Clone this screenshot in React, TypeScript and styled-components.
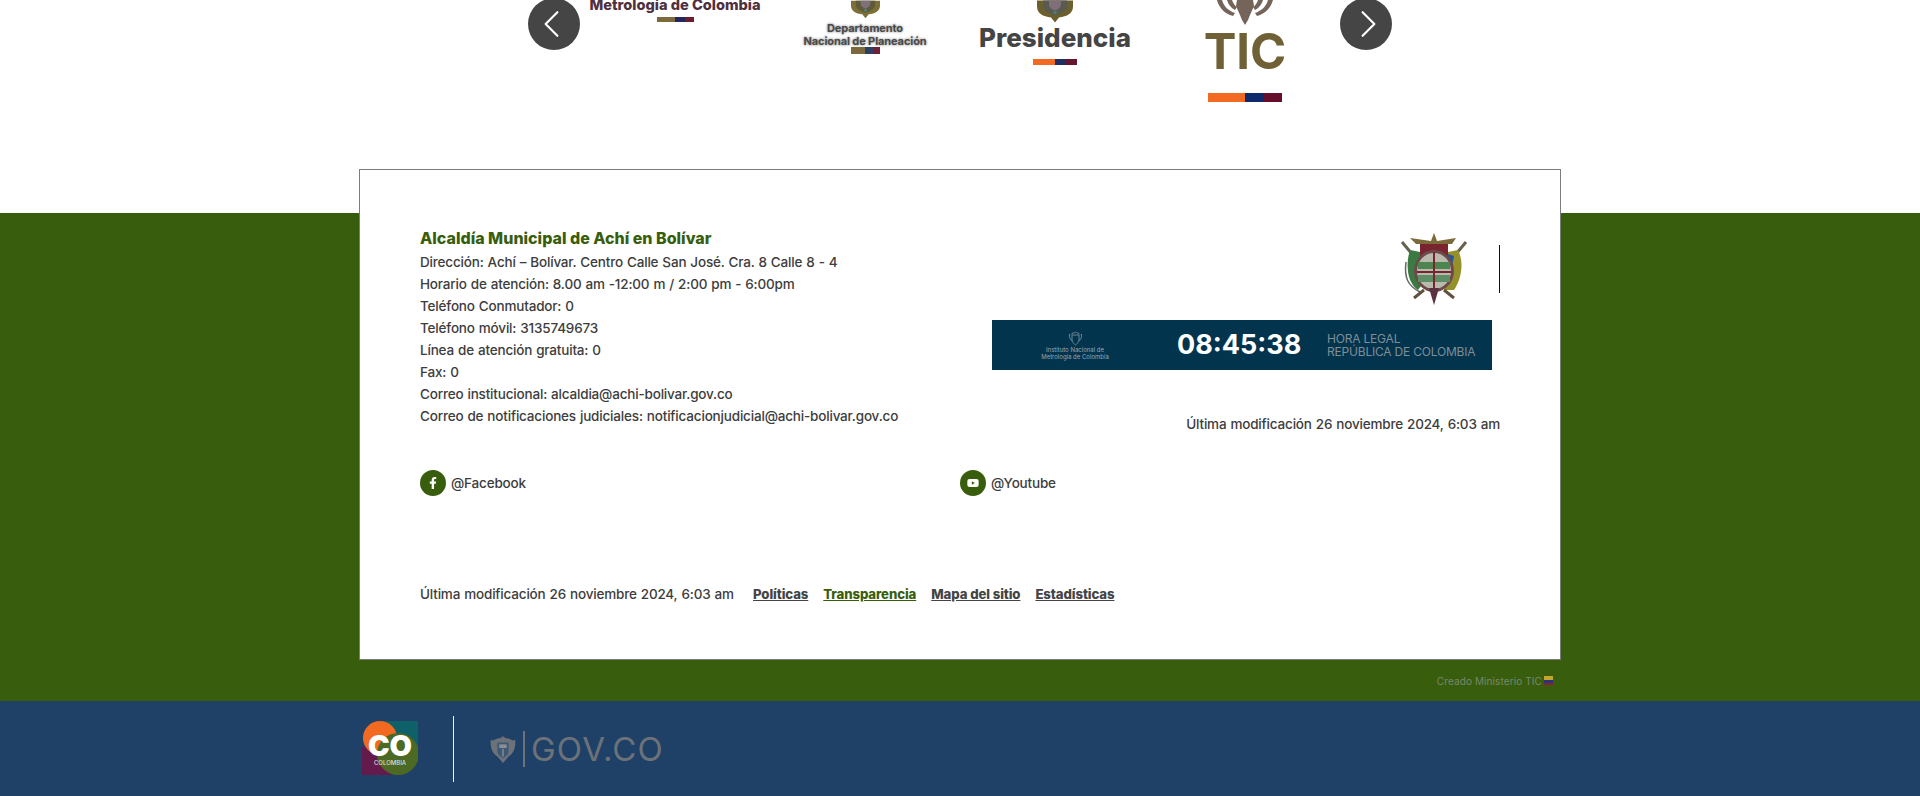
import { createGlobalStyle, styled } from "styled-components"
import { ChevronLeft, ChevronRight } from "lucide-react"
import { FaFacebookF, FaYoutube } from "react-icons/fa"

const GlobalStyle = createGlobalStyle`
  html, body {
    margin: 0;
    padding: 0;
    height: 100%;
    overflow: hidden;
    background: #fff;
  }
  body {
    font-family: Inter, "Liberation Sans", sans-serif;
    color: #3d3d3d;
  }
`

const Top = styled.section`
  height: 215px;
  margin-top: -2px;
  display: flex;
  justify-content: center;
  align-items: flex-start;
`
const Arrow = styled.button<{ $side: "left" | "right" }>`
  width: 52px;
  height: 52px;
  flex: none;
  border: 0;
  border-radius: 50%;
  background: #454545;
  color: #fff;
  display: flex;
  align-items: center;
  justify-content: center;
  padding: ${(p) => (p.$side === "left" ? "0 5px 0 0" : "0 0 0 5px")};
`
const Slide = styled.div<{ $top: number }>`
  width: 190px;
  height: 130px;
  padding-top: ${(p) => p.$top}px;
  box-sizing: border-box;
  display: flex;
  flex-direction: column;
  align-items: center;
  white-space: nowrap;
`
const LogoName = styled.div<{ $size: number; $color: string; $h: number; $weight?: number }>`
  font-size: ${(p) => p.$size}px;
  line-height: ${(p) => p.$h}px;
  font-weight: ${(p) => p.$weight ?? 800};
  color: ${(p) => p.$color};
  text-align: center;
`
const SmallName = styled.div`
  font-size: 11px;
  line-height: 12.5px;
  font-weight: 700;
  color: #4a4a4a;
  text-align: center;
  letter-spacing: -0.1px;
  text-shadow: 0 0 3px #9a9a9a, 0 0 2px #b0b0b0;
`
const TricolorBar = styled.div<{ $w: number; $h: number; $mt: number; $a: string; $b: string; $c: string }>`
  width: ${(p) => p.$w}px;
  height: ${(p) => p.$h}px;
  margin-top: ${(p) => p.$mt}px;
  background: linear-gradient(
    90deg,
    ${(p) => p.$a} 0 50%,
    ${(p) => p.$b} 50% 75%,
    ${(p) => p.$c} 75% 100%
  );
`
const CrestHolder = styled.div<{ $mt?: number }>`
  display: flex;
  margin-top: ${(p) => p.$mt ?? 0}px;
`

const Green = styled.section`
  display: flow-root;
  height: 488px;
  background: #385e0d;
`
const Card = styled.div`
  width: 1202px;
  height: 491px;
  box-sizing: border-box;
  margin: -44px auto 0;
  padding: 57px 60px 0;
  background: #fff;
  border: 1px solid #7c7c7c;
  font-size: 13.5px;
  line-height: 22px;
  letter-spacing: -0.18px;
  word-spacing: 0.6px;
`
const Columns = styled.div`
  display: grid;
  grid-template-columns: 540px 540px;
`
const Title = styled.h2`
  margin: 0 0 2px;
  font-size: 16px;
  line-height: 22px;
  font-weight: 800;
  color: #385e0d;
  letter-spacing: 0;
  word-spacing: 0;
`
const Line = styled.p`
  margin: 0;
  font-weight: 500;
`
const RightCol = styled.div`
  display: flex;
  flex-direction: column;
  align-items: flex-end;
`
const ShieldRow = styled.div`
  display: flex;
  align-items: center;
  height: 74px;
  margin-top: 5px;
`
const Cursor = styled.div`
  width: 1px;
  height: 48px;
  background: #111;
  margin-left: 29px;
`
const Clock = styled.div`
  width: 500px;
  height: 50px;
  margin: 14px 8px 0 0;
  background: #03344e;
  display: flex;
  align-items: center;
  letter-spacing: 0;
  word-spacing: 0;
`
const ClockOrg = styled.div`
  width: 166px;
  margin-right: 19px;
  display: flex;
  flex-direction: column;
  align-items: center;
  color: #9aa7ae;
  font-size: 6px;
  line-height: 7px;
  text-align: center;
`
const ClockTime = styled.div`
  color: #fff;
  font-size: 27px;
  line-height: 32px;
  font-weight: 700;
  width: 150px;
`
const ClockLabel = styled.div`
  color: #7f8d96;
  font-size: 12px;
  line-height: 13px;
  letter-spacing: -0.2px;
`
const RightMod = styled.p`
  margin: 43px 0 0;
  font-weight: 500;
`
const Socials = styled.div`
  display: grid;
  grid-template-columns: 540px 540px;
  margin-top: 35px;
`
const Social = styled.a`
  display: flex;
  align-items: center;
  gap: 5px;
  color: #3d3d3d;
  font-weight: 500;
`
const SocialIcon = styled.span`
  width: 26px;
  height: 26px;
  border-radius: 50%;
  background: #385e0d;
  color: #fff;
  display: flex;
  align-items: center;
  justify-content: center;
  font-size: 12px;
`
const BottomRow = styled.div`
  display: flex;
  margin-top: 87px;
`
const Mod = styled.span`
  font-weight: 500;
  width: 333px;
`
const FootLinks = styled.nav`
  display: flex;
  gap: 15px;
`
const FootLink = styled.a<{ $green?: boolean }>`
  font-weight: 800;
  font-size: 13.2px;
  letter-spacing: -0.1px;
  word-spacing: 0;
  text-decoration: underline;
  color: ${(p) => (p.$green ? "#385e0d" : "#444")};
`
const Credit = styled.div`
  width: 1202px;
  height: 41px;
  margin: 0 auto;
  box-sizing: border-box;
  padding-right: 8px;
  display: flex;
  align-items: center;
  justify-content: flex-end;
  gap: 2px;
  font-size: 10px;
  letter-spacing: 0.1px;
  color: #79876b;
`
const Flag = styled.span`
  width: 9px;
  height: 9px;
  background: linear-gradient(#c4a72a 0 50%, #26357a 50% 75%, #8c1f33 75% 100%);
`

const Blue = styled.footer`
  height: 95px;
  background: #1f4168;
`
const BlueInner = styled.div`
  width: 1202px;
  height: 100%;
  margin: 0 auto;
  box-sizing: border-box;
  padding-left: 3px;
  display: flex;
  align-items: center;
`
const Divider = styled.div`
  width: 1px;
  height: 66px;
  background: #f0f0f0;
  margin: 0 35px;
`
const GovMark = styled.div`
  display: flex;
  align-items: center;
  color: #6d7278;
`
const GovBar = styled.div`
  width: 2px;
  height: 36px;
  background: #6d7278;
  margin: 0 6px;
`
const GovText = styled.span`
  font-size: 33px;
  line-height: 36px;
  font-weight: 400;
  letter-spacing: 1.2px;
`

function CrestBottom({ w, h, outer, inner }: { w: number; h: number; outer: string; inner: string }) {
  return (
    <svg width={w} height={h} viewBox="0 0 36 22">
      <path d="M0 0H36V6C36 13 30 16 22 17L18 22L14 17C6 16 0 13 0 6Z" fill={outer} />
      <path d="M6 0H30V5C30 10 24 13 18 15C12 13 6 10 6 5Z" fill={inner} />
      <path d="M12 0H24V4C24 7 21 9 18 10C15 9 12 7 12 4Z" fill="#7f6f78" />
      <circle cx="18" cy="12" r="1.8" fill="#4f7f72" />
    </svg>
  )
}

function GovCrest({ size }: { size: number }) {
  return (
    <svg width={size} height={size} viewBox="0 0 28 30">
      <path d="M4 6C8 2 11 5 14 1C17 5 20 2 24 6L27 5C28 14 25 20 20 23L14 30L8 23C3 20 0 14 1 5Z" fill="#6d7278" />
      <path d="M8 8H20V17C20 21 17 23 14 25C11 23 8 21 8 17Z" fill="#3d5875" />
      <path d="M10 10H18V14H10Z" fill="#8a8f94" />
      <path d="M14 15V23" stroke="#8a8f94" strokeWidth="1.5" />
    </svg>
  )
}

function MetroCrest({ size, color }: { size: number; color: string }) {
  return (
    <svg width={size} height={size} viewBox="0 0 28 30" fill="none" stroke={color}>
      <path d="M5 7C7 3 11 5 14 2C17 5 21 3 23 7" strokeWidth="2" />
      <path d="M2 6C1 14 4 18 8 20M26 6C27 14 24 18 20 20" strokeWidth="2" />
      <path d="M7 8H21V17C21 23 17 25 14 28C11 25 7 23 7 17Z" strokeWidth="2" />
    </svg>
  )
}

function MunicipalShield() {
  return (
    <svg width="72" height="74" viewBox="0 0 72 74">
      <path d="M36 1L39 9L58 6L54 12H18L12 6L33 9Z" fill="#7b6a3a" />
      <path d="M4 10L14 22M68 10L58 22" stroke="#66624e" strokeWidth="3" />
      <path d="M12 18C8 30 8 50 20 58L26 50L22 20Z" fill="#3c7a44" />
      <path d="M60 18L50 20L46 58H56C64 46 66 30 60 18Z" fill="#95902a" />
      <path d="M50 22L56 24L52 44L48 40Z" fill="#27539a" />
      <path d="M8 30C6 46 10 54 22 60" stroke="#666" strokeWidth="1.5" fill="none" />
      <rect x="22" y="12" width="28" height="16" fill="#7a2430" />
      <ellipse cx="36" cy="39" rx="20" ry="21" fill="#6d4a4a" />
      <ellipse cx="36" cy="39" rx="17" ry="18" fill="#b9b9ad" />
      <path d="M20 30H52V37H20Z" fill="#4c8550" />
      <path d="M20 43H52V50H20Z" fill="#5f8d65" />
      <path d="M19 40H53M36 20V66" stroke="#7a2430" strokeWidth="2" />
      <path d="M31 56L36 73L41 56Z" fill="#5a3140" />
      <path d="M16 66L26 58M56 66L46 58" stroke="#5f5140" strokeWidth="3" />
    </svg>
  )
}

function Eagle() {
  return (
    <svg width="56" height="25" viewBox="0 0 56 25" fill="#75645a">
      <path d="M0 0H5C7 7 12 11 18 13L16 16C8 14 2 8 0 0Z" />
      <path d="M56 0H51C49 7 44 11 38 13L40 16C48 14 54 8 56 0Z" />
      <path d="M10 0H15C16 3 18 6 20 7L18 10C14 8 11 4 10 0Z" />
      <path d="M46 0H41C40 3 38 6 36 7L38 10C42 8 45 4 46 0Z" />
      <path d="M20 0H36L37 6L33 15L31 20L28 25L25 20L23 15L19 6Z" />
    </svg>
  )
}

function CoLogo() {
  return (
    <svg width="56" height="56" viewBox="0 0 56 56">
      <rect x="20" y="0" width="36" height="30" fill="#0e6169" />
      <rect x="0" y="26" width="30" height="28" fill="#651a4c" />
      <circle cx="18" cy="17" r="17" fill="#f26a21" />
      <circle cx="36" cy="33" r="21" fill="#4c6a24" />
      <text x="28" y="35" textAnchor="middle" fontFamily="Inter, sans-serif" fontSize="29" fontWeight="900" fill="#fff">CO</text>
      <text x="28" y="44" textAnchor="middle" fontFamily="Inter, sans-serif" fontSize="6" fontWeight="500" fill="#ddd">COLOMBIA</text>
    </svg>
  )
}

export default function App() {
  return (
    <>
      <GlobalStyle />
      <Top>
        <Arrow $side="left" aria-label="Anterior">
          <ChevronLeft size={54} strokeWidth={1.1} />
        </Arrow>
        <Slide $top={0}>
          <LogoName $size={14.6} $color="#4f3040" $h={14}>Metrología de Colombia</LogoName>
          <TricolorBar $w={37} $h={5} $mt={5} $a="#7b6a3c" $b="#26265f" $c="#6b1e30" />
        </Slide>
        <Slide $top={2}>
          <CrestHolder>
            <CrestBottom w={29} h={19} outer="#7c7038" inner="#5f5a3a" />
          </CrestHolder>
          <CrestHolder $mt={3}>
            <SmallName>
              Departamento
              <br />
              Nacional de Planeación
            </SmallName>
          </CrestHolder>
          <TricolorBar $w={29} $h={7} $mt={0} $a="#7c6a3f" $b="#2e3f63" $c="#6f2038" />
        </Slide>
        <Slide $top={2}>
          <CrestHolder>
            <CrestBottom w={36} h={23} outer="#6b5f2e" inner="#5a5a50" />
          </CrestHolder>
          <LogoName $size={26} $color="#444" $h={30}>Presidencia</LogoName>
          <TricolorBar $w={44} $h={6} $mt={6} $a="#f26a21" $b="#1f2f66" $c="#63162e" />
        </Slide>
        <Slide $top={2}>
          <Eagle />
          <LogoName $size={49} $color="#6f6036" $h={54} $weight={700}>TIC</LogoName>
          <TricolorBar $w={74} $h={9} $mt={14} $a="#f26a21" $b="#10296b" $c="#650f2c" />
        </Slide>
        <Arrow $side="right" aria-label="Siguiente">
          <ChevronRight size={54} strokeWidth={1.1} />
        </Arrow>
      </Top>
      <Green>
        <Card>
          <Columns>
            <div>
              <Title>Alcaldía Municipal de Achí en Bolívar</Title>
              <Line>Dirección: Achí – Bolívar. Centro Calle San José. Cra. 8 Calle 8 - 4</Line>
              <Line>Horario de atención: 8.00 am -12:00 m / 2:00 pm - 6:00pm</Line>
              <Line>Teléfono Conmutador: 0</Line>
              <Line>Teléfono móvil: 3135749673</Line>
              <Line>Línea de atención gratuita: 0</Line>
              <Line>Fax: 0</Line>
              <Line>Correo institucional: alcaldia@achi-bolivar.gov.co</Line>
              <Line>Correo de notificaciones judiciales: notificacionjudicial@achi-bolivar.gov.co</Line>
            </div>
            <RightCol>
              <ShieldRow>
                <MunicipalShield />
                <Cursor />
              </ShieldRow>
              <Clock>
                <ClockOrg>
                  <MetroCrest size={15} color="#6f8796" />
                  Instituto Nacional de
                  <br />
                  Metrología de Colombia
                </ClockOrg>
                <ClockTime>08:45:38</ClockTime>
                <ClockLabel>
                  HORA LEGAL
                  <br />
                  REPÚBLICA DE COLOMBIA
                </ClockLabel>
              </Clock>
              <RightMod>Última modificación 26 noviembre 2024, 6:03 am</RightMod>
            </RightCol>
          </Columns>
          <Socials>
            <Social>
              <SocialIcon><FaFacebookF /></SocialIcon>
              @Facebook
            </Social>
            <Social>
              <SocialIcon><FaYoutube /></SocialIcon>
              @Youtube
            </Social>
          </Socials>
          <BottomRow>
            <Mod>Última modificación 26 noviembre 2024, 6:03 am</Mod>
            <FootLinks>
              <FootLink>Políticas</FootLink>
              <FootLink $green>Transparencia</FootLink>
              <FootLink>Mapa del sitio</FootLink>
              <FootLink>Estadísticas</FootLink>
            </FootLinks>
          </BottomRow>
        </Card>
        <Credit>
          Creado Ministerio TIC
          <Flag />
        </Credit>
      </Green>
      <Blue>
        <BlueInner>
          <CoLogo />
          <Divider />
          <GovMark>
            <GovCrest size={28} />
            <GovBar />
            <GovText>GOV.CO</GovText>
          </GovMark>
        </BlueInner>
      </Blue>
    </>
  )
}
